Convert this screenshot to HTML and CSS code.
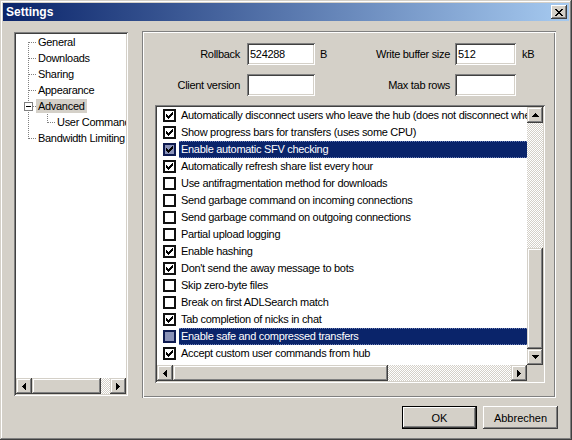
FILE: index.html
```html
<!DOCTYPE html>
<html>
<head>
<meta charset="utf-8">
<title>Settings</title>
<link rel="stylesheet" href="styles.css">
</head>
<body>
<div class="window">
  <div class="titlebar">
    <span class="title">Settings</span>
    <span class="close"><svg width="8" height="7" viewBox="0 0 8 7" shape-rendering="crispEdges"><path d="M0 0h2v1H0zM6 0h2v1H6zM1 1h2v1H1zM5 1h2v1H5zM2 2h4v1H2zM3 3h2v1H3zM2 4h4v1H2zM1 5h2v1H1zM5 5h2v1H5zM0 6h2v1H0zM6 6h2v1H6z"/></svg></span>
  </div>
  <div class="client">
    <div class="main">
      <div class="tree">
        <div class="tree-items">
          <div class="trow"><span class="g g-first"></span><span class="tlabel">General</span></div>
          <div class="trow"><span class="g g-mid"></span><span class="tlabel">Downloads</span></div>
          <div class="trow"><span class="g g-mid"></span><span class="tlabel">Sharing</span></div>
          <div class="trow"><span class="g g-mid"></span><span class="tlabel">Appearance</span></div>
          <div class="trow"><span class="g g-mid"><span class="minus"></span></span><span class="tlabel sel">Advanced</span></div>
          <div class="trow"><span class="g g-pass"></span><span class="g2"></span><span class="tlabel">User Commands</span></div>
          <div class="trow"><span class="g g-last"></span><span class="tlabel">Bandwidth Limiting</span></div>
        </div>
        <div class="hscroll">
          <span class="sbtn"><svg width="4" height="7" viewBox="0 0 4 7" shape-rendering="crispEdges"><path d="M0 3h1v1H0zM1 2h1v3H1zM2 1h1v5H2zM3 0h1v7H3z"/></svg></span>
          <span class="track-h"><span class="thumb-h tree-thumb"></span></span>
          <span class="sbtn"><svg width="4" height="7" viewBox="0 0 4 7" shape-rendering="crispEdges"><path d="M3 3h1v1H3zM2 2h1v3H2zM1 1h1v5H1zM0 0h1v7H0z"/></svg></span>
        </div>
      </div>
      <div class="panel">
        <div class="form">
          <span class="lbl">Rollback</span>
          <span class="field">524288</span>
          <span class="unit">B</span>
          <span class="lbl lbl2">Write buffer size</span>
          <span class="field">512</span>
          <span class="unit unit2">kB</span>
          <span class="lbl">Client version</span>
          <span class="field"></span>
          <span></span>
          <span class="lbl lbl2">Max tab rows</span>
          <span class="field"></span>
          <span></span>
        </div>
        <div class="list">
          <div class="list-body">
            <div class="rows">
              <div class="item"><span class="cb on"><svg width="7" height="7" viewBox="0 0 7 7" shape-rendering="crispEdges"><path d="M0 2h1v3H0zM1 3h1v3H1zM2 4h1v3H2zM3 3h1v3H3zM4 2h1v3H4zM5 1h1v3H5zM6 0h1v3H6z"/></svg></span><span class="lab">Automatically disconnect users who leave the hub (does not disconnect when hub goes down)</span></div>
              <div class="item"><span class="cb on"><svg width="7" height="7" viewBox="0 0 7 7" shape-rendering="crispEdges"><path d="M0 2h1v3H0zM1 3h1v3H1zM2 4h1v3H2zM3 3h1v3H3zM4 2h1v3H4zM5 1h1v3H5zM6 0h1v3H6z"/></svg></span><span class="lab">Show progress bars for transfers (uses some CPU)</span></div>
              <div class="item sel"><span class="cb on"><svg width="7" height="7" viewBox="0 0 7 7" shape-rendering="crispEdges"><path d="M0 2h1v3H0zM1 3h1v3H1zM2 4h1v3H2zM3 3h1v3H3zM4 2h1v3H4zM5 1h1v3H5zM6 0h1v3H6z"/></svg></span><span class="lab">Enable automatic SFV checking</span></div>
              <div class="item"><span class="cb on"><svg width="7" height="7" viewBox="0 0 7 7" shape-rendering="crispEdges"><path d="M0 2h1v3H0zM1 3h1v3H1zM2 4h1v3H2zM3 3h1v3H3zM4 2h1v3H4zM5 1h1v3H5zM6 0h1v3H6z"/></svg></span><span class="lab">Automatically refresh share list every hour</span></div>
              <div class="item"><span class="cb"></span><span class="lab">Use antifragmentation method for downloads</span></div>
              <div class="item"><span class="cb"></span><span class="lab">Send garbage command on incoming connections</span></div>
              <div class="item"><span class="cb"></span><span class="lab">Send garbage command on outgoing connections</span></div>
              <div class="item"><span class="cb"></span><span class="lab">Partial upload logging</span></div>
              <div class="item"><span class="cb on"><svg width="7" height="7" viewBox="0 0 7 7" shape-rendering="crispEdges"><path d="M0 2h1v3H0zM1 3h1v3H1zM2 4h1v3H2zM3 3h1v3H3zM4 2h1v3H4zM5 1h1v3H5zM6 0h1v3H6z"/></svg></span><span class="lab">Enable hashing</span></div>
              <div class="item"><span class="cb on"><svg width="7" height="7" viewBox="0 0 7 7" shape-rendering="crispEdges"><path d="M0 2h1v3H0zM1 3h1v3H1zM2 4h1v3H2zM3 3h1v3H3zM4 2h1v3H4zM5 1h1v3H5zM6 0h1v3H6z"/></svg></span><span class="lab">Don't send the away message to bots</span></div>
              <div class="item"><span class="cb"></span><span class="lab">Skip zero-byte files</span></div>
              <div class="item"><span class="cb"></span><span class="lab">Break on first ADLSearch match</span></div>
              <div class="item"><span class="cb on"><svg width="7" height="7" viewBox="0 0 7 7" shape-rendering="crispEdges"><path d="M0 2h1v3H0zM1 3h1v3H1zM2 4h1v3H2zM3 3h1v3H3zM4 2h1v3H4zM5 1h1v3H5zM6 0h1v3H6z"/></svg></span><span class="lab">Tab completion of nicks in chat</span></div>
              <div class="item sel"><span class="cb"></span><span class="lab">Enable safe and compressed transfers</span></div>
              <div class="item"><span class="cb on"><svg width="7" height="7" viewBox="0 0 7 7" shape-rendering="crispEdges"><path d="M0 2h1v3H0zM1 3h1v3H1zM2 4h1v3H2zM3 3h1v3H3zM4 2h1v3H4zM5 1h1v3H5zM6 0h1v3H6z"/></svg></span><span class="lab">Accept custom user commands from hub</span></div>
            </div>
            <div class="vscroll">
              <span class="sbtn"><svg width="7" height="4" viewBox="0 0 7 4" shape-rendering="crispEdges"><path d="M3 0h1v1H3zM2 1h3v1H2zM1 2h5v1H1zM0 3h7v1H0z"/></svg></span>
              <span class="track-v"><span class="thumb-v"></span></span>
              <span class="sbtn"><svg width="7" height="4" viewBox="0 0 7 4" shape-rendering="crispEdges"><path d="M0 0h7v1H0zM1 1h5v1H1zM2 2h3v1H2zM3 3h1v1H3z"/></svg></span>
            </div>
          </div>
          <div class="list-foot">
            <div class="hscroll">
              <span class="sbtn"><svg width="4" height="7" viewBox="0 0 4 7" shape-rendering="crispEdges"><path d="M0 3h1v1H0zM1 2h1v3H1zM2 1h1v5H2zM3 0h1v7H3z"/></svg></span>
              <span class="track-h"><span class="thumb-h list-thumb"></span></span>
              <span class="sbtn"><svg width="4" height="7" viewBox="0 0 4 7" shape-rendering="crispEdges"><path d="M3 3h1v1H3zM2 2h1v3H2zM1 1h1v5H1zM0 0h1v7H0z"/></svg></span>
            </div>
            <span class="corner"></span>
          </div>
        </div>
      </div>
    </div>
    <div class="buttons">
      <button class="btn default">OK</button>
      <button class="btn">Abbrechen</button>
    </div>
  </div>
</div>
</body>
</html>
```
FILE: styles.css
```css
* { box-sizing: border-box; }
html, body { margin: 0; padding: 0; }
body {
  width: 572px;
  height: 440px;
  overflow: hidden;
  background: #d4d0c8;
  font-family: "Liberation Sans", Arial, sans-serif;
  font-size: 11px;
  letter-spacing: -0.3px;
  color: #000;
}
svg { display: block; fill: #000; }

.window {
  width: 572px;
  height: 440px;
  padding: 3px;
  background: #d4d0c8;
  box-shadow: inset -1px -1px #404040, inset 1px 1px #d4d0c8, inset -2px -2px #808080, inset 2px 2px #ffffff;
  display: flex;
  flex-direction: column;
}

.titlebar {
  height: 18px;
  flex: none;
  display: flex;
  align-items: center;
  justify-content: space-between;
  padding: 0 2px 0 3px;
  background: linear-gradient(to right, #0a246a, #a6caf0);
  color: #fff;
}
.title { font-weight: bold; font-size: 12px; letter-spacing: 0; }
.close {
  width: 16px;
  height: 14px;
  display: flex;
  align-items: center;
  justify-content: center;
  background: #d4d0c8;
  box-shadow: inset -1px -1px #404040, inset 1px 1px #ffffff, inset -2px -2px #808080, inset 2px 2px #d4d0c8;
}

.client {
  flex: 1;
  padding: 10px 11px 0 11px;
  display: flex;
  flex-direction: column;
}
.main { display: flex; align-items: flex-start; }

/* tree */
.tree {
  width: 114px;
  height: 364px;
  margin-top: 1px;
  padding: 2px;
  background: #fff;
  box-shadow: inset 1px 1px #808080, inset -1px -1px #ffffff, inset 2px 2px #404040, inset -2px -2px #d4d0c8;
  display: flex;
  flex-direction: column;
}
.tree-items { flex: 1; overflow: hidden; }
.trow { display: flex; align-items: center; height: 16px; white-space: nowrap; }
.g, .g2 {
  width: 20px;
  height: 16px;
  flex: none;
  display: flex;
  align-items: flex-start;
  background-repeat: no-repeat;
  background-image:
    repeating-linear-gradient(to bottom, #808080 0 1px, transparent 1px 2px),
    repeating-linear-gradient(to right, #808080 0 1px, transparent 1px 2px);
}
.g-mid { background-size: 1px 16px, 7px 1px; background-position: 12px 0, 13px 8px; }
.g-first { background-size: 1px 8px, 7px 1px; background-position: 12px 8px, 13px 8px; }
.g-last { background-size: 1px 9px, 7px 1px; background-position: 12px 0, 13px 8px; }
.g-pass { background-size: 1px 16px, 0 0; background-position: 12px 0, 0 0; }
.g2 { width: 19px; background-size: 1px 9px, 7px 1px; background-position: 11px 0, 12px 8px; }
.minus {
  width: 9px;
  height: 9px;
  margin: 4px 0 0 8px;
  border: 1px solid #808080;
  background: #fff;
  display: flex;
  align-items: center;
  justify-content: center;
}
.minus::before { content: ""; width: 5px; height: 1px; background: #000; }
.tlabel { padding: 0 2px; height: 14px; line-height: 14px; }
.tlabel.sel { background: #d4d0c8; }

/* scrollbars */
.hscroll { height: 16px; flex: none; display: flex; }
.vscroll { width: 16px; flex: none; display: flex; flex-direction: column; }
.sbtn {
  width: 16px;
  height: 16px;
  flex: none;
  display: flex;
  align-items: center;
  justify-content: center;
  background: #d4d0c8;
  box-shadow: inset -1px -1px #404040, inset 1px 1px #d4d0c8, inset -2px -2px #808080, inset 2px 2px #ffffff;
}
.track-h, .track-v {
  flex: 1;
  display: flex;
  background-color: #ffffff;
  background-image:
    linear-gradient(45deg, #d4d0c8 25%, transparent 25%, transparent 75%, #d4d0c8 75%),
    linear-gradient(45deg, #d4d0c8 25%, transparent 25%, transparent 75%, #d4d0c8 75%);
  background-size: 2px 2px;
  background-position: 0 0, 1px 1px;
}
.track-v { flex-direction: column; justify-content: flex-end; }
.thumb-h, .thumb-v {
  background: #d4d0c8;
  box-shadow: inset -1px -1px #404040, inset 1px 1px #d4d0c8, inset -2px -2px #808080, inset 2px 2px #ffffff;
}
.thumb-v { height: 101px; }
.tree-thumb { width: 69px; }
.list-thumb { width: 215px; }

/* right panel */
.panel {
  width: 414px;
  height: 367px;
  margin-left: 14px;
  padding: 12px 0 0 2px;
  box-shadow: inset 1px 1px #808080, inset -1px -1px #ffffff, inset 2px 2px #ffffff, inset -2px -2px #808080;
}
.form {
  display: grid;
  grid-template-columns: 103px 68px 40px 100px 61px auto;
  grid-auto-rows: 22px;
  row-gap: 9px;
  align-items: center;
}
.lbl { text-align: right; padding-right: 7px; white-space: nowrap; }
.lbl2 { padding-right: 5px; }
.unit { padding-left: 5px; }
.unit2 { padding-left: 6px; }
.field {
  height: 22px;
  padding: 0 3px;
  display: flex;
  align-items: center;
  background: #fff;
  box-shadow: inset 1px 1px #808080, inset -1px -1px #ffffff, inset 2px 2px #404040, inset -2px -2px #d4d0c8;
}

.list {
  width: 390px;
  height: 278px;
  margin: 9px 0 0 11px;
  padding: 2px;
  background: #fff;
  box-shadow: inset 1px 1px #808080, inset -1px -1px #ffffff, inset 2px 2px #404040, inset -2px -2px #d4d0c8;
  display: flex;
  flex-direction: column;
}
.list-body { flex: 1; min-height: 0; display: flex; }
.rows { flex: 1; min-width: 0; overflow: hidden; }
.list-foot { display: flex; flex: none; }
.list-foot .hscroll { flex: 1; }
.corner { width: 16px; height: 16px; background: #d4d0c8; }

.item { height: 17px; display: flex; align-items: center; white-space: nowrap; }
.cb {
  width: 13px;
  height: 13px;
  margin-left: 6px;
  flex: none;
  border: 2px solid #111;
  background: #fff;
  display: flex;
  align-items: center;
  justify-content: center;
}
.lab {
  flex: 1;
  min-width: 0;
  overflow: hidden;
  margin-left: 3px;
  padding: 0 2px;
  height: 17px;
  line-height: 17px;
}
.item.sel .lab {
  background: #0a246a;
  color: #fff;
  border-top: 1px dotted #6d7fb5;
  border-bottom: 1px dotted #6d7fb5;
  line-height: 15px;
}
.item.sel .cb { background: #8a92b8; border-color: #0d1a50; }

/* buttons */
.buttons {
  display: flex;
  justify-content: flex-end;
  gap: 6px;
  margin-top: 8px;
}
.btn {
  width: 75px;
  height: 23px;
  padding: 0;
  border: none;
  font: inherit;
  color: #000;
  background: #d4d0c8;
  box-shadow: inset -1px -1px #404040, inset 1px 1px #ffffff, inset -2px -2px #808080, inset 2px 2px #d4d0c8;
}
.btn.default { border: 1px solid #000; }
```
